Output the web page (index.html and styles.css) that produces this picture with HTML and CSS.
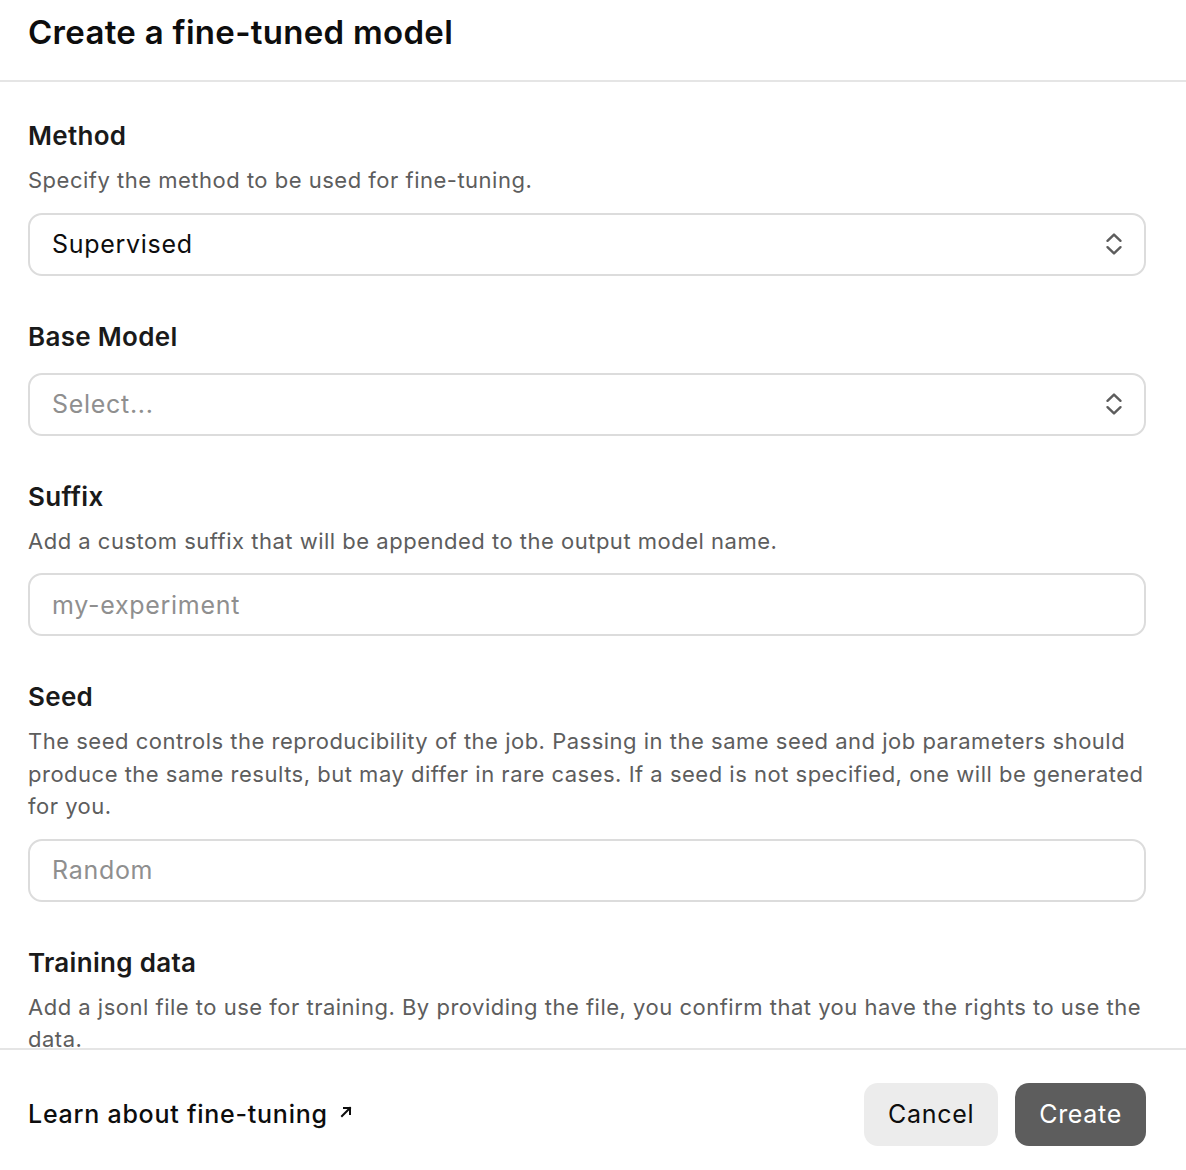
FILE: index.html
```html
<!DOCTYPE html>
<html lang="en">
<head>
<meta charset="utf-8">
<title>Create a fine-tuned model</title>
<link rel="stylesheet" href="styles.css">
</head>
<body>
<div class="modal">
  <header class="modal-header">
    <h1 class="modal-title">Create a fine-tuned model</h1>
  </header>
  <main class="modal-body">
    <section class="field">
      <div class="field-label">Method</div>
      <div class="field-desc">Specify the method to be used for fine-tuning.</div>
      <div class="control select">
        <span class="value">Supervised</span>
        <svg class="chev" width="18" height="24" viewBox="0 0 18 24"><path d="M2.5 8.8 L9 2.6 L15.5 8.8 M2.5 15.2 L9 21.4 L15.5 15.2" fill="none" stroke="#5d5d5d" stroke-width="2.4" stroke-linecap="round" stroke-linejoin="round"/></svg>
      </div>
    </section>
    <section class="field">
      <div class="field-label">Base Model</div>
      <div class="control select no-desc">
        <span class="placeholder">Select...</span>
        <svg class="chev" width="18" height="24" viewBox="0 0 18 24"><path d="M2.5 8.8 L9 2.6 L15.5 8.8 M2.5 15.2 L9 21.4 L15.5 15.2" fill="none" stroke="#5d5d5d" stroke-width="2.4" stroke-linecap="round" stroke-linejoin="round"/></svg>
      </div>
    </section>
    <section class="field">
      <div class="field-label">Suffix</div>
      <div class="field-desc">Add a custom suffix that will be appended to the output model name.</div>
      <div class="control"><span class="placeholder">my-experiment</span></div>
    </section>
    <section class="field">
      <div class="field-label">Seed</div>
      <div class="field-desc">The seed controls the reproducibility of the job. Passing in the same seed and job parameters should produce the same results, but may differ in rare cases. If a seed is not specified, one will be generated for you.</div>
      <div class="control"><span class="placeholder">Random</span></div>
    </section>
    <section class="field">
      <div class="field-label">Training data</div>
      <div class="field-desc">Add a jsonl file to use for training. By providing the file, you confirm that you have the rights to use the data.</div>
    </section>
  </main>
  <footer class="modal-footer">
    <a class="learn" href="#">Learn about fine-tuning <svg class="arrow" width="14" height="14" viewBox="0 0 14 14"><path d="M3 11 L11 3 M5 3 H11 V9" fill="none" stroke="#0d0d0d" stroke-width="2" stroke-linecap="square"/></svg></a>
    <div class="actions">
      <button class="btn btn-secondary">Cancel</button>
      <button class="btn btn-primary">Create</button>
    </div>
  </footer>
</div>
</body>
</html>
```
FILE: styles.css
```css
html, body {
  margin: 0;
  padding: 0;
  background: #ffffff;
}
body {
  font-family: "Inter", "Noto Sans", sans-serif;
  color: #0d0d0d;
}
.modal {
  width: 1186px;
  height: 1170px;
  display: flex;
  flex-direction: column;
  overflow: hidden;
}
.modal-header {
  height: 82px;
  flex: none;
  border-bottom: 2px solid #e5e5e5;
  box-sizing: border-box;
  padding: 0 28px;
  display: flex;
  align-items: center;
}
.modal-title {
  margin: 0;
  margin-top: -16px;
  font-size: 33px;
  font-weight: 600;
  letter-spacing: 0.3px;
  color: #0d0d0d;
}
.modal-body {
  flex: 1;
  overflow: hidden;
  padding: 36px 32px 0 28px;
  display: flex;
  flex-direction: column;
  gap: 43px;
}
.field {
  display: flex;
  flex-direction: column;
}
.field-label {
  font-size: 26px;
  line-height: 36px;
  font-weight: 600;
  letter-spacing: 0.3px;
  color: #1a1a1a;
}
.field-desc {
  margin-top: 10px;
  font-size: 22px;
  line-height: 32.5px;
  letter-spacing: 0.5px;
  color: #5d5d5d;
}
.control {
  margin-top: 16px;
  margin-right: 8px;
  height: 63px;
  box-sizing: border-box;
  border: 2px solid #dcdcdc;
  border-radius: 14px;
  padding: 0 21px 0 22px;
  display: flex;
  align-items: center;
  justify-content: space-between;
  font-size: 25px;
  letter-spacing: 0.7px;
}
.control.no-desc {
  margin-top: 18px;
}
.value {
  color: #0d0d0d;
}
.placeholder {
  color: #8f8f8f;
}
.chev {
  flex: none;
}
.modal-footer {
  flex: none;
  height: 122px;
  box-sizing: border-box;
  border-top: 2px solid #e5e5e5;
  padding: 8px 40px 0 28px;
  display: flex;
  align-items: center;
  justify-content: space-between;
}
.learn {
  font-size: 25px;
  font-weight: 500;
  letter-spacing: 0.75px;
  color: #0d0d0d;
  text-decoration: none;
  display: flex;
  align-items: center;
  gap: 11px;
}
.arrow {
  flex: none;
  margin-top: -4px;
}
.actions {
  display: flex;
  gap: 17px;
}
.btn {
  height: 63px;
  border: none;
  border-radius: 14px;
  padding: 0 24px;
  font-family: inherit;
  font-size: 25px;
  letter-spacing: 0.7px;
}
.btn-secondary {
  background: #ececec;
  color: #0d0d0d;
}
.btn-primary {
  background: #5d5d5d;
  color: #ffffff;
}
```
